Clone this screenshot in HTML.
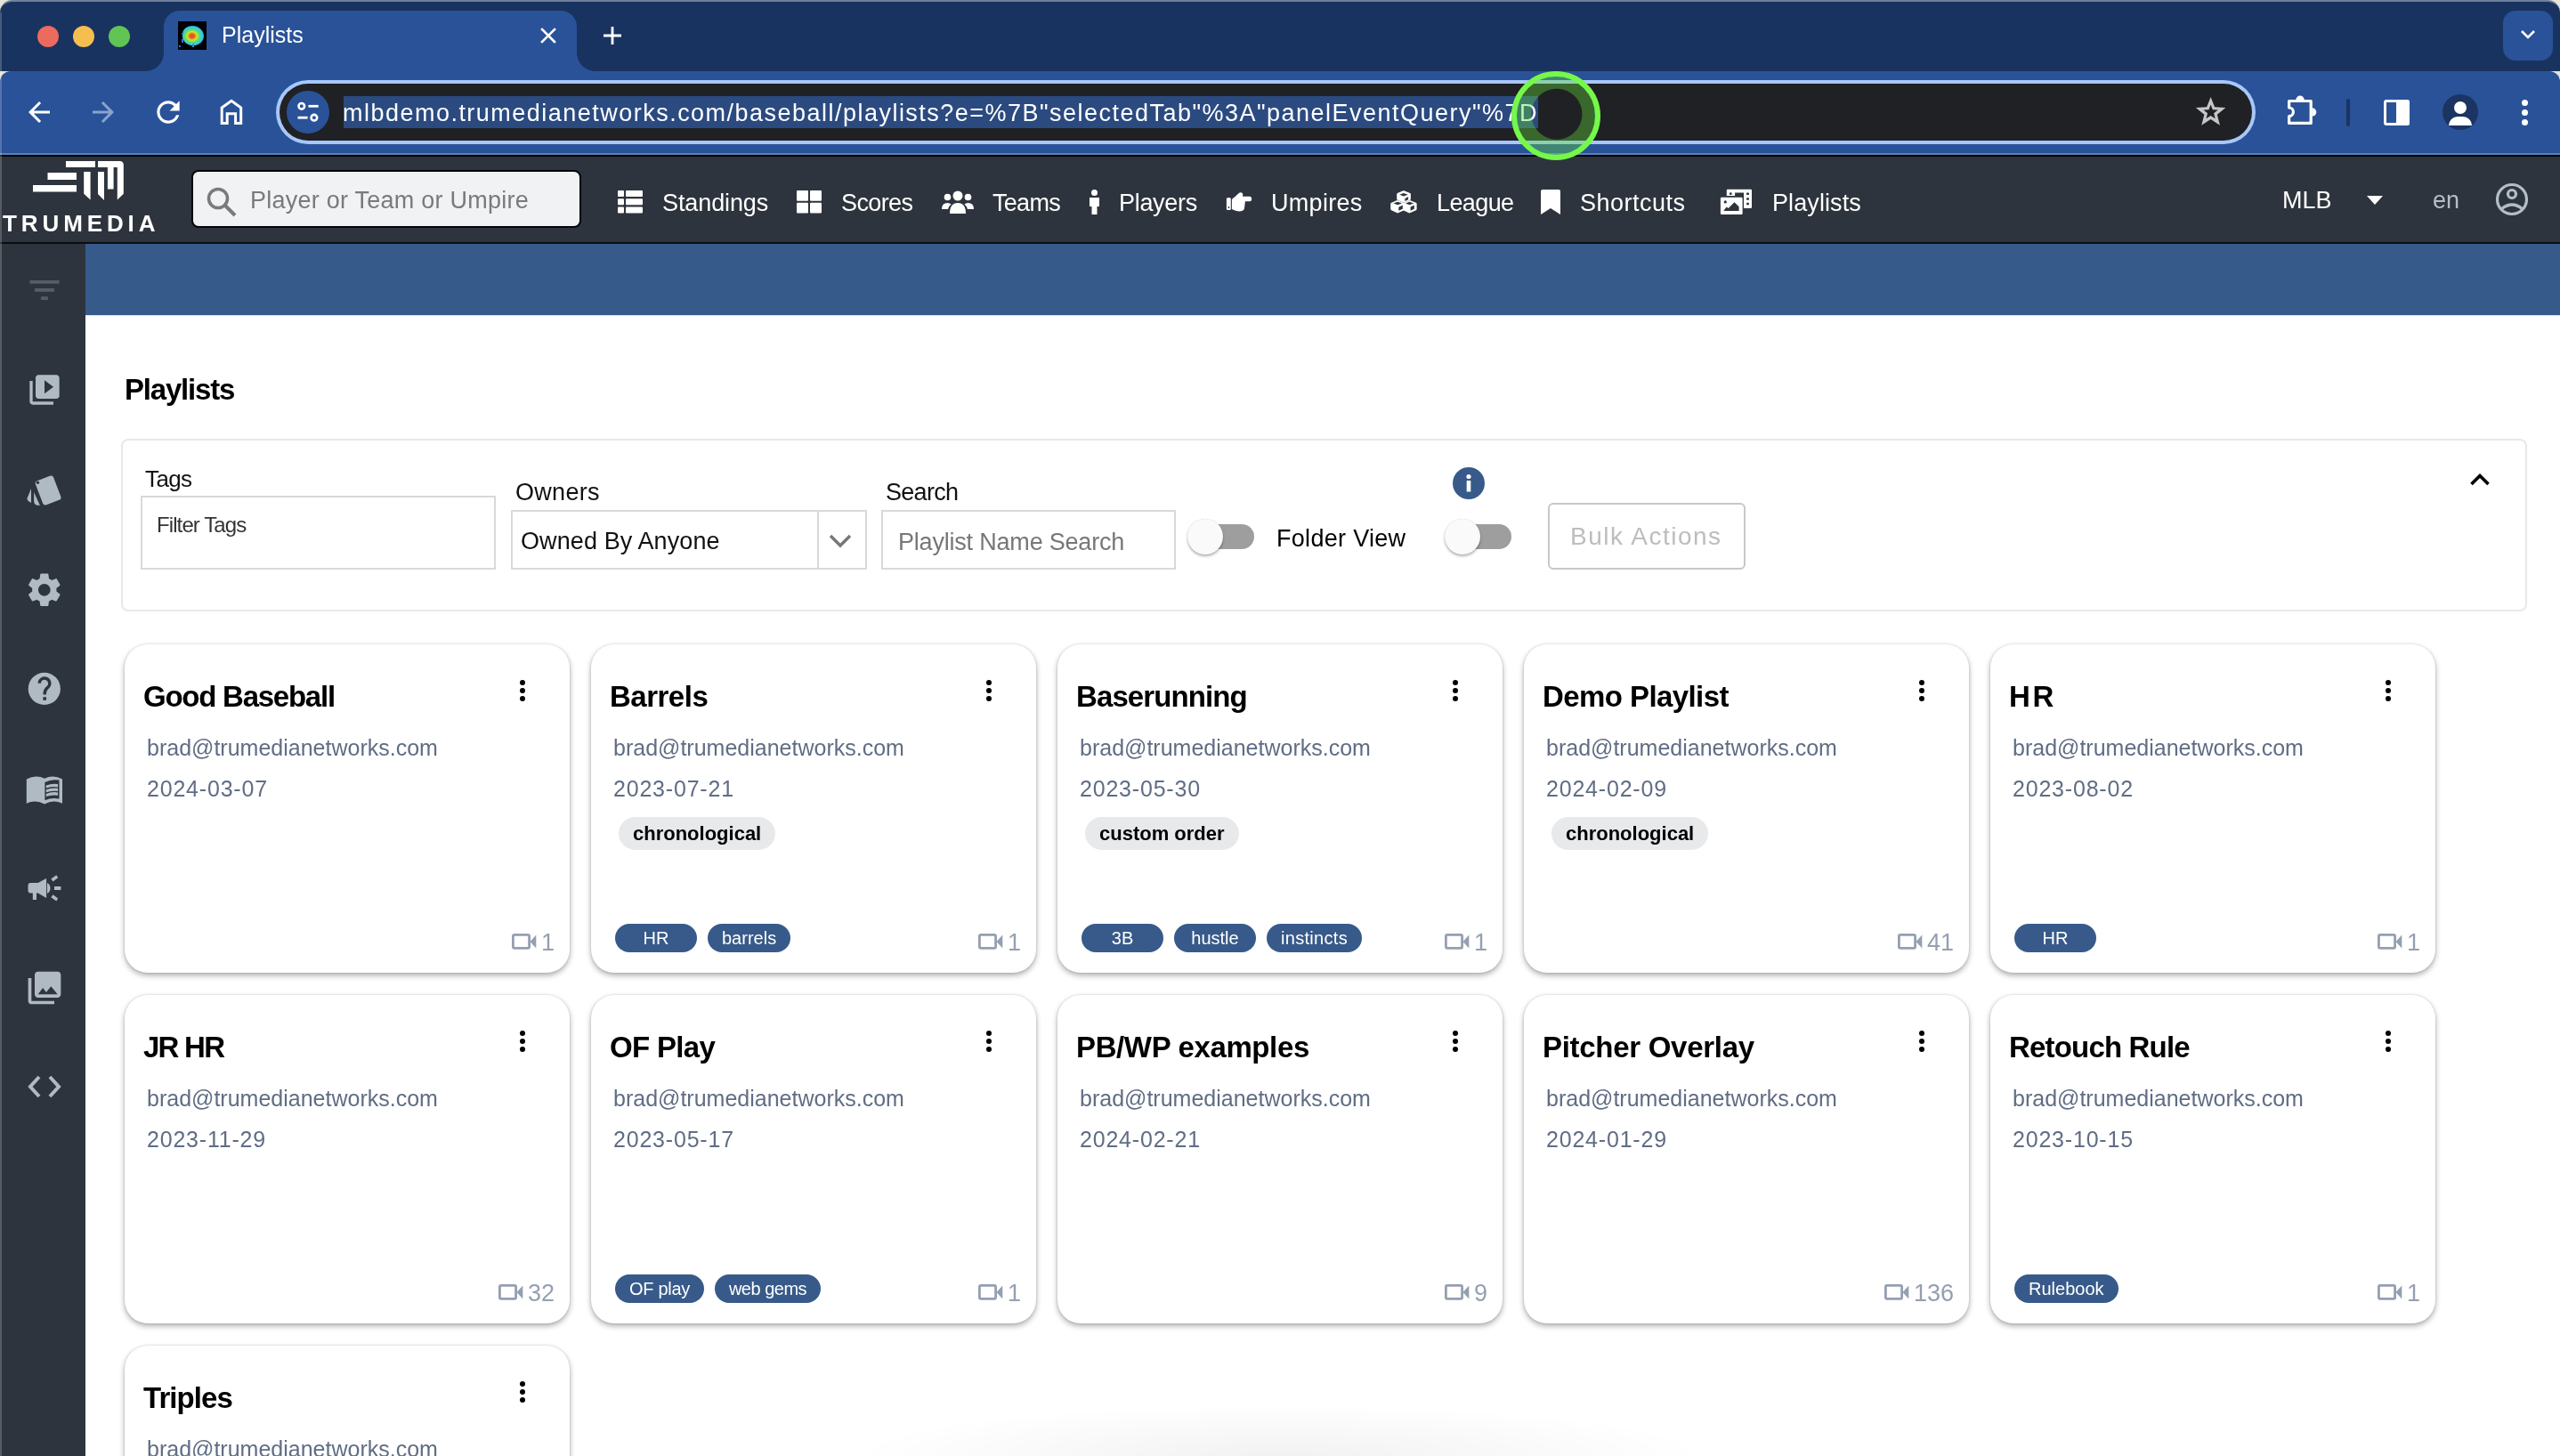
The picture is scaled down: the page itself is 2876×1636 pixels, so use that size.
<!DOCTYPE html>
<html><head><meta charset="utf-8">
<style>
*{box-sizing:border-box;margin:0;padding:0}
html,body{width:2876px;height:1636px;overflow:hidden;background:#e6e3d8;font-family:"Liberation Sans",sans-serif;-webkit-font-smoothing:antialiased}
.a{will-change:transform}
.a{position:absolute}
.nw{white-space:nowrap}
#tabstrip{left:0;top:0;width:2876px;height:80px;background:#193360;border-radius:14px 14px 0 0;border-top:2px solid #6f7f9c}
#toolbar{left:0;top:80px;width:2876px;height:93px;background:#2a5298;border-radius:12px 12px 0 0}
#tbline{left:0;top:172px;width:2876px;height:2px;background:#5a82b8}
#tbblack{left:0;top:174px;width:2876px;height:2px;background:#000}
#header{left:0;top:176px;width:2876px;height:96px;background:#2e343d}
#hdrblack{left:0;top:272px;width:2876px;height:2px;background:#0b0d10}
#sidebar{left:0;top:274px;width:96px;height:1362px;background:#2e343d}
#banner{left:96px;top:274px;width:2780px;height:80px;background:#365a8a}
.light{border-radius:50%;width:24px;height:24px;top:29px}
.tabtxt{color:#fff;font-size:25px}
.nav{color:#fff;font-size:27px;top:212px;line-height:32px}
.card{width:500px;height:369px;background:#fff;border-radius:26px;box-shadow:0 3px 6px rgba(0,0,0,.32),0 0 3px rgba(0,0,0,.14)}
.ttl{font-weight:bold;color:#000;font-size:33px;left:21px;top:41px;line-height:36px}
.em{color:#606d84;font-size:25px;left:25px;top:102px;line-height:28px}
.dt{color:#606d84;font-size:25px;left:25px;top:148px;line-height:28px;letter-spacing:0.8px}
.kb{left:444px;top:40px;width:8px;height:27px}
.kb i{display:block;width:6px;height:6px;border-radius:50%;background:#000;margin:0 0 3px 0}
.gchip{left:31px;top:194px;height:37px;border-radius:19px;background:#e8e9eb;color:#000;font-weight:bold;font-size:22px;line-height:37px;padding:0 16px}
.chips{left:27px;top:314px;height:32px;display:flex;gap:12px}
.chip{height:32px;min-width:92px;border-radius:16px;background:#375a8a;color:#fff;font-size:20px;line-height:32px;padding:0 16px;text-align:center}
.cnt svg{position:relative;top:-1px}
.cnt{right:17px;top:323px;height:24px;color:#959fb1;font-size:27px;line-height:24px;display:flex;align-items:center;gap:5px}
</style></head><body>
<!-- browser chrome -->
<div id="tabstrip" class="a"></div>
<div id="toolbar" class="a"></div>
<div id="tbline" class="a"></div>
<div id="tbblack" class="a"></div>
<div id="header" class="a"></div>
<div id="hdrblack" class="a"></div>
<div id="sidebar" class="a"></div>
<div class="a" style="left:96px;top:354px;width:2780px;height:1282px;background:#fff"></div>
<div class="a" style="left:96px;top:354px;width:2780px;height:1px;background:#e6e2e2"></div>
<div id="banner" class="a"></div>

<div class="a light" style="left:42px;background:#ed6a5e"></div>
<div class="a light" style="left:82px;background:#f5bf4f"></div>
<div class="a light" style="left:122px;background:#61c554"></div>

<!-- active tab -->
<div class="a" style="left:184px;top:12px;width:464px;height:70px;background:#2a5298;border-radius:18px 18px 0 0"></div>
<div class="a" style="left:164px;top:60px;width:20px;height:20px;background:radial-gradient(circle at 0 0,transparent 19.5px,#2a5298 20px)"></div>
<div class="a" style="left:648px;top:60px;width:20px;height:20px;background:radial-gradient(circle at 100% 0,transparent 19.5px,#2a5298 20px)"></div>
<div class="a tabtxt nw" style="left:249px;top:24px;line-height:30px">Playlists</div>


<!-- tab extras -->
<div class="a" style="left:200px;top:24px;width:32px;height:32px;background:#000;overflow:hidden">
 <div class="a" style="left:5px;top:5px;width:24px;height:22px;border-radius:45% 55% 50% 50%;background:radial-gradient(ellipse at 45% 52%,#e33a1a 0,#f06a20 16%,#c8e830 30%,#50e070 44%,#38c8e8 62%,#2a7ae0 80%,rgba(20,40,120,0) 100%)"></div>
 <div class="a" style="left:4px;top:13px;width:2px;height:2px;background:#3a6ae0"></div>
 <div class="a" style="left:4px;top:20px;width:2px;height:4px;background:#3a6ae0"></div>
 <div class="a" style="left:16px;top:25px;width:2px;height:4px;background:#3a8ae0"></div>
 <div class="a" style="left:1px;top:27px;width:2px;height:2px;background:#3a6ae0"></div>
</div>
<svg class="a" style="left:604px;top:28px" width="24" height="24" viewBox="0 0 24 24"><path d="M5 5L19 19M19 5L5 19" stroke="#fff" stroke-width="2.6" stroke-linecap="square"/></svg>
<svg class="a" style="left:676px;top:28px" width="24" height="24" viewBox="0 0 24 24"><path d="M12 2V22M2 12H22" stroke="#fff" stroke-width="2.8"/></svg>
<div class="a" style="left:2812px;top:12px;width:56px;height:56px;background:#2a5298;border-radius:14px"></div>
<svg class="a" style="left:2830px;top:32px" width="20" height="14" viewBox="0 0 20 14"><path d="M3 3L10 10L17 3" stroke="#fff" stroke-width="2.6" fill="none"/></svg>

<!-- toolbar icons -->
<svg class="a" style="left:26px;top:108px" width="36" height="36" viewBox="0 0 24 24"><path fill="#fff" d="M20 11H7.83l5.59-5.59L12 4l-8 8 8 8 1.41-1.41L7.83 13H20v-2z"/></svg>
<svg class="a" style="left:98px;top:108px" width="36" height="36" viewBox="0 0 24 24"><path fill="#8aa3cc" d="M12 4l-1.41 1.41L16.17 11H4v2h12.17l-5.58 5.59L12 20l8-8z"/></svg>
<svg class="a" style="left:170px;top:107px" width="38" height="38" viewBox="0 0 24 24"><path fill="#fff" d="M17.65 6.35C16.2 4.9 14.21 4 12 4c-4.42 0-7.99 3.58-7.99 8s3.57 8 7.99 8c3.73 0 6.84-2.55 7.73-6h-2.08c-.82 2.33-3.04 4-5.65 4-3.31 0-6-2.69-6-6s2.69-6 6-6c1.66 0 3.14.69 4.22 1.78L13 11h7V4l-2.35 2.35z"/></svg>
<svg class="a" style="left:240px;top:104px" width="40" height="42" viewBox="240 104 40 42"><path d="M249.2 121L260 113.3L270.7 121V138.5H264.6V127.7H255.2V138.5H249.2Z" stroke="#fff" stroke-width="3" fill="none" stroke-linejoin="miter"/></svg>

<!-- url bar -->
<div class="a" style="left:310px;top:90px;width:2224px;height:72px;border-radius:36px;background:#a8c7fa"></div>
<div class="a" style="left:314px;top:94px;width:2216px;height:64px;border-radius:32px;background:#202124"></div>
<div class="a" style="left:322px;top:102px;width:48px;height:48px;border-radius:50%;background:#2a5298"></div>
<svg class="a" style="left:330px;top:110px" width="32" height="32" viewBox="0 0 32 32"><circle cx="8.8" cy="9.3" r="3.3" stroke="#fff" stroke-width="2.6" fill="none"/><path d="M16.5 9.3H27.7" stroke="#fff" stroke-width="2.8"/><circle cx="22.9" cy="22.2" r="3.3" stroke="#fff" stroke-width="2.6" fill="none"/><path d="M4.5 22.2H15.6" stroke="#fff" stroke-width="2.8"/></svg>
<div class="a" style="left:386px;top:108px;width:1342px;height:36px;background:#2b4a80"></div>
<div class="a nw" style="left:385px;top:109px;line-height:36px;color:#fff;font-size:27px;letter-spacing:1.48px">mlbdemo.trumedianetworks.com/baseball/playlists?e=%7B"selectedTab"%3A"panelEventQuery"%7D</div>
<svg class="a" style="left:2460px;top:104px" width="48" height="42" viewBox="2460 104 48 42"><path fill="#c6c6c6" d="M2483.60 108.90L2488.07 120.35L2500.34 121.06L2490.83 128.85L2493.95 140.74L2483.60 134.10L2473.25 140.74L2476.37 128.85L2466.86 121.06L2479.13 120.35Z"/><path fill="#202124" d="M2483.60 117.60L2485.77 123.21L2491.78 123.54L2487.12 127.34L2488.65 133.16L2483.60 129.90L2478.55 133.16L2480.08 127.34L2475.42 123.54L2481.43 123.21Z"/></svg>
<!-- green cursor ring -->
<div class="a" style="left:1698px;top:80px;width:100px;height:100px;border-radius:50%;border:6px solid #75f84a;background:radial-gradient(circle at 51% 48%,rgba(0,0,0,0) 28px,rgba(100,220,60,.38) 29px)"></div>

<!-- right toolbar icons -->
<svg class="a" style="left:2562px;top:102px" width="44" height="42" viewBox="2562 102 44 42"><path d="M2571.6 113.5H2596.2V138.4H2571.6V130.6A4.8 4.8 0 0 0 2571.6 121Z" stroke="#fff" stroke-width="3.2" fill="none" stroke-linejoin="round"/><path fill="#fff" d="M2579.3 112.2A4.7 4.7 0 0 1 2588.7 112.2Z"/><path fill="#fff" d="M2597.6 121.3A4.7 4.7 0 0 1 2597.6 130.7Z"/></svg>
<div class="a" style="left:2636px;top:111px;width:4px;height:31px;border-radius:2px;background:#1b3461"></div>
<div class="a" style="left:2678px;top:112px;width:29px;height:29px;border:3px solid #fff;border-radius:3px"></div>
<div class="a" style="left:2692px;top:112px;width:15px;height:29px;background:#fff;border-radius:0 3px 3px 0"></div>
<div class="a" style="left:2744px;top:106px;width:40px;height:40px;border-radius:50%;background:#1b3461;overflow:hidden">
 <div class="a" style="left:13px;top:8px;width:14px;height:14px;border-radius:50%;background:#fff"></div>
 <div class="a" style="left:7px;top:25px;width:26px;height:10px;border-radius:13px 13px 0 0;background:#fff"></div>
</div>
<div class="a" style="left:2833px;top:112px;width:7px;height:7px;border-radius:50%;background:#fff"></div>
<div class="a" style="left:2833px;top:123px;width:7px;height:7px;border-radius:50%;background:#fff"></div>
<div class="a" style="left:2833px;top:134px;width:7px;height:7px;border-radius:50%;background:#fff"></div>


<!-- app header -->
<svg class="a" style="left:0;top:176px" width="190" height="96" viewBox="0 176 190 96">
 <path fill="#fff" d="M74 181H107V188H74Z M53.5 194H86V202H53.5Z M37 208H86V215.5H37Z
  M94.2 193H101.6V224.5L94.2 217.8Z
  M110 193H117V225L110 218Z
  M110 181H134.5Q138.8 181 138.8 185.5V217.8L131.8 224.5V188H127.6V212.5H120.9V188H110Z"/>
</svg>
<div class="a nw" style="left:3px;top:238px;font-size:26px;font-weight:bold;color:#fff;letter-spacing:4.9px;line-height:26px">TRUMEDIA</div>

<div class="a" style="left:215px;top:191px;width:438px;height:65px;background:#f1f2f4;border:2px solid #050607;border-radius:8px"></div>
<svg class="a" style="left:230px;top:209px" width="38" height="36" viewBox="0 0 38 36"><circle cx="15" cy="14" r="10.5" stroke="#7a7a7a" stroke-width="3.6" fill="none"/><path d="M22.5 21.5L34 33" stroke="#7a7a7a" stroke-width="4" /></svg>
<div class="a nw" style="left:281px;top:209px;font-size:27px;color:#7a7a7a;line-height:32px;letter-spacing:0.25px">Player or Team or Umpire</div>

<!-- nav icons -->
<svg class="a" style="left:694px;top:214px" width="28" height="26" viewBox="0 0 28 26"><g fill="#fff"><rect x="0" y="0" width="7" height="7" rx="1"/><rect x="9" y="0" width="19" height="7" rx="1"/><rect x="0" y="9.3" width="7" height="7" rx="1"/><rect x="9" y="9.3" width="19" height="7" rx="1"/><rect x="0" y="18.6" width="7" height="7" rx="1"/><rect x="9" y="18.6" width="19" height="7" rx="1"/></g></svg>
<div class="a nav nw" style="left:744px;letter-spacing:-0.1px">Standings</div>
<svg class="a" style="left:895px;top:214px" width="28" height="26" viewBox="0 0 28 26"><g fill="#fff"><rect x="0" y="0" width="13" height="11.8" rx="1"/><rect x="15" y="0" width="13" height="11.8" rx="1"/><rect x="0" y="13.8" width="13" height="11.8" rx="1"/><rect x="15" y="13.8" width="13" height="11.8" rx="1"/></g></svg>
<div class="a nav nw" style="left:945px;letter-spacing:-0.6px">Scores</div>
<svg class="a" style="left:1058px;top:214px" width="36" height="26" viewBox="0 0 36 26"><g fill="#fff"><circle cx="18" cy="6" r="5.5"/><circle cx="6.5" cy="7.5" r="3.8"/><circle cx="29.5" cy="7.5" r="3.8"/><path d="M9 26Q9 14 18 14Q27 14 27 26Z"/><path d="M0 21Q0 14 6.5 14Q9 14 10.5 15.5Q7.5 18 7 21Z"/><path d="M36 21Q36 14 29.5 14Q27 14 25.5 15.5Q28.5 18 29 21Z"/></g></svg>
<div class="a nav nw" style="left:1115px;letter-spacing:-0.7px">Teams</div>
<svg class="a" style="left:1223px;top:213px" width="13" height="28" viewBox="0 0 13 28"><g fill="#fff"><circle cx="6.5" cy="3.5" r="3.5"/><path d="M1 9H12V19H9.5V28H3.5V19H1Z"/></g></svg>
<div class="a nav nw" style="left:1257px;letter-spacing:-0.3px">Players</div>
<svg class="a" style="left:1374px;top:212px" width="36" height="30" viewBox="1374 212 36 30"><g fill="#fff"><rect x="1377.9" y="222.2" width="4.9" height="13.7" rx="1.2"/><path d="M1383.9 225Q1384 222.5 1387 221.5L1391.5 217.2Q1393.8 215.5 1395.8 217Q1396.8 218.5 1396 220.8H1404.2Q1406.2 221 1406.2 223.6Q1406.2 226.3 1404 226.3H1398.9L1398 234Q1397.5 237.4 1392 237.4Q1388 237.4 1383.9 235Z"/></g><circle cx="1380.4" cy="233" r="0.9" fill="#2e343d"/></svg>
<div class="a nav nw" style="left:1428px;letter-spacing:0.3px">Umpires</div>
<svg class="a" style="left:1558px;top:210px" width="38" height="34" viewBox="1558 210 38 34"><g fill="#fff" stroke="#fff" stroke-width="1" stroke-linejoin="round"><path d="M1576.9 214.6L1584.3 217.6V224.2L1576.9 227.2L1569.8 224.2V217.6Z"/><path d="M1569.9 225.4L1577 228.4V235.9L1570.1 239L1562.8 235.6V228.4Z"/><path d="M1583.6 225.4L1591.1 228.4V235.6L1583.4 239L1576.8 235.9V228.4Z"/></g><g fill="#2e343d"><path d="M1572.2 218.75L1576.9 217L1581.8 218.75L1576.9 220.5Z"/><path d="M1578.3 223.2L1582.1 221.1V224.3L1578.3 226.1Z"/><path d="M1565.5 228.5L1570.2 226.7L1575 228.5L1570.2 230.3Z"/><path d="M1571.3 232.8L1575.8 230.6V234.7L1571.3 236.8Z"/><path d="M1579 228.5L1583.5 226.7L1588.2 228.5L1583.5 230.3Z"/><path d="M1584.6 232.5L1588.8 230.6V234.7L1584.6 236.8Z"/></g></svg>
<div class="a nav nw" style="left:1614px;letter-spacing:-0.6px">League</div>
<svg class="a" style="left:1731px;top:213px" width="22" height="28" viewBox="0 0 22 28"><path fill="#fff" d="M0 2Q0 0 2 0H20Q22 0 22 2V28L11 21L0 28Z"/></svg>
<div class="a nav nw" style="left:1775px;letter-spacing:0.5px">Shortcuts</div>
<svg class="a" style="left:1928px;top:208px" width="46" height="38" viewBox="1928 208 46 38"><g fill="#fff"><path d="M1940.8 212.7H1967Q1968 212.7 1968 213.7V233Q1968 234 1967 234H1959V216.4H1949.1V220.1H1939.8V213.7Q1939.8 212.7 1940.8 212.7Z"/><rect x="1932.9" y="221.7" width="24.7" height="19.3" rx="1.2"/></g><g fill="#2e343d"><circle cx="1944.3" cy="217.7" r="1.4"/><rect x="1962.1" y="216.4" width="2.8" height="2.6" rx="0.6"/><rect x="1962.1" y="222.2" width="2.8" height="2.6" rx="0.6"/><rect x="1962.1" y="227.7" width="2.8" height="2.6" rx="0.6"/><circle cx="1938.3" cy="226.9" r="1.6"/><path d="M1936.7 237V236.3L1939.8 232.5L1941.7 234L1948.5 227.2L1953.6 232.3V237Z"/></g></svg>
<div class="a nav nw" style="left:1991px;letter-spacing:0.1px">Playlists</div>

<div class="a nav nw" style="left:2564px;top:209px">MLB</div>
<svg class="a" style="left:2658px;top:219px" width="20" height="12" viewBox="0 0 20 12"><path fill="#fff" d="M1 1H19L10 11Z"/></svg>
<div class="a nav nw" style="left:2733px;top:209px;color:#b4bec8">en</div>
<svg class="a" style="left:2802px;top:204px" width="40" height="40" viewBox="0 0 40 40"><g fill="none" stroke="#b4bec8" stroke-width="3.2"><circle cx="20" cy="20" r="16.5"/><circle cx="20" cy="14" r="4.5"/><path d="M8 31Q20 21 32 31"/></g></svg>

<!-- sidebar icons -->
<svg class="a" style="left:33px;top:315px" width="34" height="23" viewBox="0 0 34 23"><g fill="#575d66"><rect x="0.4" y="0" width="33.2" height="3.7"/><rect x="6" y="9" width="21.9" height="3.8"/><rect x="13.1" y="18.2" width="7.7" height="3.8"/></g></svg>
<svg class="a" style="left:30px;top:418px" width="40" height="40" viewBox="0 0 24 24"><path fill="#b0bac3" d="M4 6H2v14c0 1.1.9 2 2 2h14v-2H4V6zm16-4H8c-1.1 0-2 .9-2 2v12c0 1.1.9 2 2 2h12c1.1 0 2-.9 2-2V4c0-1.1-.9-2-2-2zm-8 12.5v-9l6 4.5-6 4.5z"/></svg>
<svg class="a" style="left:26px;top:528px" width="48" height="44" viewBox="26 528 48 44"><g fill="#b0bac3"><rect x="-10.8" y="-14.5" width="21.6" height="29" rx="3.2" transform="translate(54.1 551) rotate(-21)"/><path d="M35 549L35 565.1Q31.5 564 30.3 560.6Z"/><path d="M38.1 553L44.9 568L40.8 567.6Q38.4 566.6 38.2 564Z"/></g><circle cx="42.4" cy="542.3" r="1.7" fill="#2e343d"/></svg>
<svg class="a" style="left:26.5px;top:640px" width="45.6" height="45.6" viewBox="0 0 24 24"><path fill="#b0bac3" d="M19.14 12.94c.04-.3.06-.61.06-.94 0-.32-.02-.64-.07-.94l2.03-1.58c.18-.14.23-.41.12-.61l-1.92-3.32c-.12-.22-.37-.29-.59-.22l-2.39.96c-.5-.38-1.03-.7-1.62-.94l-.36-2.54c-.04-.24-.24-.41-.48-.41h-3.84c-.24 0-.43.17-.47.41l-.36 2.54c-.59.24-1.13.57-1.62.94l-2.39-.96c-.22-.08-.47 0-.59.22L2.74 8.87c-.12.21-.08.47.12.61l2.03 1.58c-.05.3-.09.63-.09.94s.02.64.07.94l-2.03 1.58c-.18.14-.23.41-.12.61l1.92 3.32c.12.22.37.29.59.22l2.39-.96c.5.38 1.03.7 1.62.94l.36 2.54c.05.24.24.41.48.41h3.84c.24 0 .44-.17.47-.41l.36-2.54c.59-.24 1.13-.56 1.62-.94l2.39.96c.22.08.47 0 .59-.22l1.92-3.32c.12-.22.07-.47-.12-.61l-2.01-1.58zM12 15.6c-1.98 0-3.6-1.62-3.6-3.6s1.62-3.6 3.6-3.6 3.6 1.62 3.6 3.6-1.62 3.6-3.6 3.6z"/></svg>
<svg class="a" style="left:30px;top:754px" width="40" height="40" viewBox="30 754 40 40"><circle cx="49.8" cy="773.9" r="18.1" fill="#b0bac3"/><path d="M44.2 767.8A5.8 5.8 0 1 1 53.6 772.4Q50.2 775.2 50.2 779.2V780.6" stroke="#2e343d" stroke-width="3.4" fill="none"/><rect x="48.4" y="783.2" width="3.6" height="3.6" fill="#2e343d"/></svg>
<svg class="a" style="left:26px;top:866px" width="48" height="42" viewBox="26 866 48 42"><path fill="#b0bac3" d="M29.8 875.6Q40 870 50 874.7Q60 870 70 875.6V902.7Q60 898 50 903.4Q40 898 29.8 902.7Z"/><path fill="#2e343d" d="M50.4 878.9Q58 875 66.5 876.6V897.6Q58 895.8 50.4 899.2Z"/><g fill="#b0bac3"><path d="M51.8 882.6Q58 880 65 881V884.4Q58 883.2 51.8 885.6Z"/><path d="M51.8 887.3Q58 884.7 65 885.7V889.1Q58 887.9 51.8 890.3Z"/><path d="M51.8 892Q58 889.4 65 890.4V893.8Q58 892.6 51.8 895Z"/></g></svg>
<svg class="a" style="left:28px;top:980px" width="44" height="36" viewBox="28 980 44 36"><g fill="#b0bac3"><path d="M34.5 992H42.7L52.1 987V1009L42.7 1003.6H34.5Q31.5 1003.6 31.5 1000.6V995Q31.5 992 34.5 992Z"/><path d="M36.8 1003H41V1011H36.8Z"/><path d="M53 992Q56.5 994 56.5 998Q56.5 1002 53 1004Z"/><path d="M57.4 987.4L63.3 983.2L65.3 986.2L59.5 990.6Z"/><path d="M61 996H68.4V1000H61Z"/><path d="M57.4 1008.3L59.5 1005.3L65.1 1009.5L63.3 1012.5Z"/></g></svg>
<svg class="a" style="left:28px;top:1088px" width="44" height="44" viewBox="0 0 24 24"><path fill="#b0bac3" d="M22 16V4c0-1.1-.9-2-2-2H8c-1.1 0-2 .9-2 2v12c0 1.1.9 2 2 2h12c1.1 0 2-.9 2-2zm-11-4l2.03 2.71L16 11l4 5H8l3-4zM2 6v14c0 1.1.9 2 2 2h14v-2H4V6H2z"/></svg>
<svg class="a" style="left:30px;top:1206px" width="40" height="30" viewBox="0 0 40 30"><g fill="none" stroke="#b0bac3" stroke-width="4"><path d="M14 4L4 15L14 26"/><path d="M26 4L36 15L26 26"/></g></svg>


<!-- content -->
<div class="a nw" style="left:140px;top:421px;font-size:33px;font-weight:bold;color:#000;line-height:34px;letter-spacing:-1.2px">Playlists</div>
<div class="a" style="left:136px;top:493px;width:2703px;height:194px;border:2px solid #e8e8e8;border-radius:8px"></div>
<div class="a nw" style="left:163px;top:523px;font-size:26px;color:#111;line-height:30px;letter-spacing:-0.6px">Tags</div>
<div class="a" style="left:158px;top:557px;width:399px;height:83px;border:2px solid #d9d9d9"></div>
<div class="a nw" style="left:176px;top:576px;font-size:24px;color:#333;line-height:28px;letter-spacing:-0.9px">Filter Tags</div>
<div class="a nw" style="left:579px;top:537px;font-size:27px;color:#111;line-height:32px;letter-spacing:0.3px">Owners</div>
<div class="a" style="left:574px;top:573px;width:400px;height:67px;border:2px solid #d9d9d9"></div>
<div class="a" style="left:918px;top:573px;width:2px;height:67px;background:#d9d9d9"></div>
<div class="a nw" style="left:585px;top:592px;font-size:27px;color:#111;line-height:32px;letter-spacing:0.1px">Owned By Anyone</div>
<svg class="a" style="left:930px;top:598px" width="28" height="20" viewBox="0 0 28 20"><path d="M3 4L14 15L25 4" stroke="#777" stroke-width="3.4" fill="none"/></svg>
<div class="a nw" style="left:995px;top:537px;font-size:27px;color:#111;line-height:32px;letter-spacing:-0.7px">Search</div>
<div class="a" style="left:990px;top:573px;width:331px;height:67px;border:2px solid #d9d9d9"></div>
<div class="a nw" style="left:1009px;top:593px;font-size:27px;color:#777;line-height:32px;letter-spacing:-0.2px">Playlist Name Search</div>
<div class="a" style="left:1340px;top:589px;width:69px;height:28px;border-radius:14px;background:#9e9e9e"></div>
<div class="a" style="left:1334px;top:583px;width:40px;height:40px;border-radius:50%;background:#fafafa;box-shadow:0 2px 3px rgba(0,0,0,.3),0 0 1px rgba(0,0,0,.2)"></div>
<div class="a nw" style="left:1434px;top:589px;font-size:27px;color:#000;line-height:32px;letter-spacing:0.3px">Folder View</div>
<div class="a" style="left:1632px;top:525px;width:36px;height:36px;border-radius:50%;background:#375a8a"></div>
<svg class="a" style="left:1632px;top:525px" width="36" height="36" viewBox="0 0 36 36"><circle cx="18" cy="10.5" r="2.6" fill="#fff"/><rect x="15.7" y="15" width="4.6" height="12.5" fill="#fff"/></svg>
<div class="a" style="left:1629px;top:589px;width:69px;height:28px;border-radius:14px;background:#9e9e9e"></div>
<div class="a" style="left:1623px;top:583px;width:40px;height:40px;border-radius:50%;background:#fafafa;box-shadow:0 2px 3px rgba(0,0,0,.3),0 0 1px rgba(0,0,0,.2)"></div>
<div class="a" style="left:1739px;top:565px;width:222px;height:75px;border:2px solid #c8c8c8;border-radius:6px"></div>
<div class="a nw" style="left:1764px;top:587px;font-size:28px;color:#bdbdbd;line-height:32px;letter-spacing:1.5px">Bulk Actions</div>
<svg class="a" style="left:2770px;top:526px" width="32" height="24" viewBox="0 0 32 24"><path d="M6.5 18L16 8.5L25.5 18" stroke="#000" stroke-width="3.6" fill="none"/></svg>
<div class="a card" style="left:140px;top:724px"><div class="a ttl nw" style="letter-spacing:-1.25px">Good Baseball</div><div class="a kb"><i></i><i></i><i></i></div><div class="a em nw">brad@trumedianetworks.com</div><div class="a dt nw">2024-03-07</div><div class="a cnt nw"><svg width="28" height="18" viewBox="0 0 28 18"><rect x="1.4" y="1.4" width="18.2" height="15" rx="1.6" fill="none" stroke="#959fb1" stroke-width="2.8"/><path d="M20.5 9L27.3 1.5V16.6Z" fill="#959fb1"/></svg><span>1</span></div></div>
<div class="a card" style="left:664px;top:724px"><div class="a ttl nw" style="letter-spacing:-0.5px">Barrels</div><div class="a kb"><i></i><i></i><i></i></div><div class="a em nw">brad@trumedianetworks.com</div><div class="a dt nw">2023-07-21</div><div class="a gchip nw">chronological</div><div class="a chips"><div class="chip nw">HR</div><div class="chip nw">barrels</div></div><div class="a cnt nw"><svg width="28" height="18" viewBox="0 0 28 18"><rect x="1.4" y="1.4" width="18.2" height="15" rx="1.6" fill="none" stroke="#959fb1" stroke-width="2.8"/><path d="M20.5 9L27.3 1.5V16.6Z" fill="#959fb1"/></svg><span>1</span></div></div>
<div class="a card" style="left:1188px;top:724px"><div class="a ttl nw" style="letter-spacing:-0.9px">Baserunning</div><div class="a kb"><i></i><i></i><i></i></div><div class="a em nw">brad@trumedianetworks.com</div><div class="a dt nw">2023-05-30</div><div class="a gchip nw">custom order</div><div class="a chips"><div class="chip nw">3B</div><div class="chip nw">hustle</div><div class="chip nw" style="letter-spacing:0.3px">instincts</div></div><div class="a cnt nw"><svg width="28" height="18" viewBox="0 0 28 18"><rect x="1.4" y="1.4" width="18.2" height="15" rx="1.6" fill="none" stroke="#959fb1" stroke-width="2.8"/><path d="M20.5 9L27.3 1.5V16.6Z" fill="#959fb1"/></svg><span>1</span></div></div>
<div class="a card" style="left:1712px;top:724px"><div class="a ttl nw" style="letter-spacing:-0.58px">Demo Playlist</div><div class="a kb"><i></i><i></i><i></i></div><div class="a em nw">brad@trumedianetworks.com</div><div class="a dt nw">2024-02-09</div><div class="a gchip nw">chronological</div><div class="a cnt nw"><svg width="28" height="18" viewBox="0 0 28 18"><rect x="1.4" y="1.4" width="18.2" height="15" rx="1.6" fill="none" stroke="#959fb1" stroke-width="2.8"/><path d="M20.5 9L27.3 1.5V16.6Z" fill="#959fb1"/></svg><span>41</span></div></div>
<div class="a card" style="left:2236px;top:724px"><div class="a ttl nw" style="letter-spacing:2.7px">HR</div><div class="a kb"><i></i><i></i><i></i></div><div class="a em nw">brad@trumedianetworks.com</div><div class="a dt nw">2023-08-02</div><div class="a chips"><div class="chip nw">HR</div></div><div class="a cnt nw"><svg width="28" height="18" viewBox="0 0 28 18"><rect x="1.4" y="1.4" width="18.2" height="15" rx="1.6" fill="none" stroke="#959fb1" stroke-width="2.8"/><path d="M20.5 9L27.3 1.5V16.6Z" fill="#959fb1"/></svg><span>1</span></div></div>
<div class="a card" style="left:140px;top:1118px"><div class="a ttl nw" style="letter-spacing:-1.75px">JR HR</div><div class="a kb"><i></i><i></i><i></i></div><div class="a em nw">brad@trumedianetworks.com</div><div class="a dt nw">2023-11-29</div><div class="a cnt nw"><svg width="28" height="18" viewBox="0 0 28 18"><rect x="1.4" y="1.4" width="18.2" height="15" rx="1.6" fill="none" stroke="#959fb1" stroke-width="2.8"/><path d="M20.5 9L27.3 1.5V16.6Z" fill="#959fb1"/></svg><span>32</span></div></div>
<div class="a card" style="left:664px;top:1118px"><div class="a ttl nw" style="letter-spacing:-0.67px">OF Play</div><div class="a kb"><i></i><i></i><i></i></div><div class="a em nw">brad@trumedianetworks.com</div><div class="a dt nw">2023-05-17</div><div class="a chips"><div class="chip nw" style="letter-spacing:-0.3px">OF play</div><div class="chip nw" style="letter-spacing:-0.5px">web gems</div></div><div class="a cnt nw"><svg width="28" height="18" viewBox="0 0 28 18"><rect x="1.4" y="1.4" width="18.2" height="15" rx="1.6" fill="none" stroke="#959fb1" stroke-width="2.8"/><path d="M20.5 9L27.3 1.5V16.6Z" fill="#959fb1"/></svg><span>1</span></div></div>
<div class="a card" style="left:1188px;top:1118px"><div class="a ttl nw" style="letter-spacing:-0.38px">PB/WP examples</div><div class="a kb"><i></i><i></i><i></i></div><div class="a em nw">brad@trumedianetworks.com</div><div class="a dt nw">2024-02-21</div><div class="a cnt nw"><svg width="28" height="18" viewBox="0 0 28 18"><rect x="1.4" y="1.4" width="18.2" height="15" rx="1.6" fill="none" stroke="#959fb1" stroke-width="2.8"/><path d="M20.5 9L27.3 1.5V16.6Z" fill="#959fb1"/></svg><span>9</span></div></div>
<div class="a card" style="left:1712px;top:1118px"><div class="a ttl nw" style="letter-spacing:-0.29px">Pitcher Overlay</div><div class="a kb"><i></i><i></i><i></i></div><div class="a em nw">brad@trumedianetworks.com</div><div class="a dt nw">2024-01-29</div><div class="a cnt nw"><svg width="28" height="18" viewBox="0 0 28 18"><rect x="1.4" y="1.4" width="18.2" height="15" rx="1.6" fill="none" stroke="#959fb1" stroke-width="2.8"/><path d="M20.5 9L27.3 1.5V16.6Z" fill="#959fb1"/></svg><span>136</span></div></div>
<div class="a card" style="left:2236px;top:1118px"><div class="a ttl nw" style="letter-spacing:-0.82px">Retouch Rule</div><div class="a kb"><i></i><i></i><i></i></div><div class="a em nw">brad@trumedianetworks.com</div><div class="a dt nw">2023-10-15</div><div class="a chips"><div class="chip nw">Rulebook</div></div><div class="a cnt nw"><svg width="28" height="18" viewBox="0 0 28 18"><rect x="1.4" y="1.4" width="18.2" height="15" rx="1.6" fill="none" stroke="#959fb1" stroke-width="2.8"/><path d="M20.5 9L27.3 1.5V16.6Z" fill="#959fb1"/></svg><span>1</span></div></div>
<div class="a card" style="left:140px;top:1512px"><div class="a ttl nw" style="letter-spacing:-0.93px">Triples</div><div class="a kb"><i></i><i></i><i></i></div><div class="a em nw">brad@trumedianetworks.com</div></div>

<div class="a" style="left:0;top:14px;width:2px;height:1622px;background:rgba(255,255,255,.2)"></div>
<div class="a" style="left:960px;top:1578px;width:960px;height:58px;background:radial-gradient(ellipse 50% 100% at 50% 100%,rgba(0,0,0,.05),rgba(0,0,0,0) 100%)"></div>
</body></html>
